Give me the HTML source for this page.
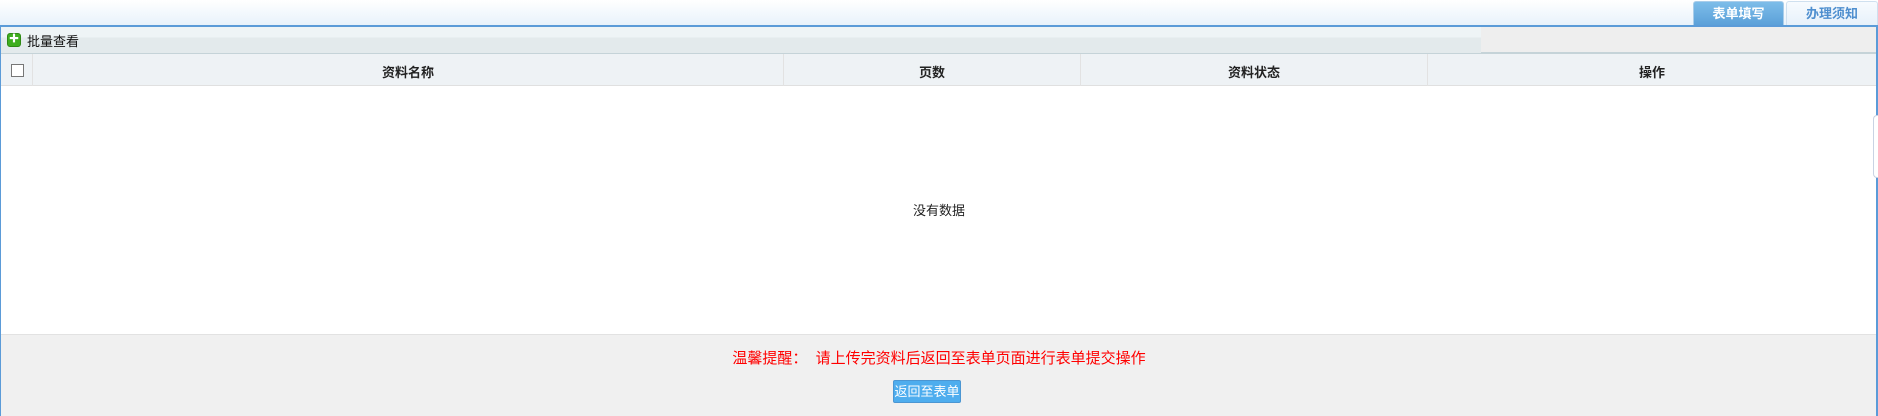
<!DOCTYPE html><html><head><meta charset="utf-8"><style>
*{margin:0;padding:0;box-sizing:border-box}
body{width:1878px;height:416px;overflow:hidden;background:#fff;font-family:"Liberation Sans","Noto Sans CJK SC",sans-serif;font-size:12px;position:relative}
.a{position:absolute}
</style></head><body>
<div class="a" style="left:0;top:0;width:1878px;height:25px;background:linear-gradient(#fff,#e8f2fb)"></div>
<div class="a" style="left:1693px;top:1px;width:91px;height:25px;background:linear-gradient(#7dbde9,#5a9fd8);border:1px solid #a9cdea;border-bottom:none;color:#fff;font-weight:bold;font-size:13px;text-align:center;line-height:24px;border-radius:3px 3px 0 0">表单填写</div>
<div class="a" style="left:1786px;top:1px;width:92px;height:25px;background:linear-gradient(#f7fbfe,#e6f0fa);border:1px solid #cfe0ef;border-bottom:none;color:#4f8fcf;font-weight:bold;font-size:13px;text-align:center;line-height:24px;border-radius:3px 3px 0 0">办理须知</div>
<div class="a" style="left:0;top:25px;width:1878px;height:2px;background:#5b9bd8"></div>
<div class="a" style="left:0;top:27px;width:1px;height:389px;background:#5b9bd8"></div>
<div class="a" style="left:1876px;top:27px;width:2px;height:389px;background:#5b9bd8"></div>
<div class="a" style="top:27px;left:1px;width:1875px;height:27px;background:#eeeeee;border-bottom:2px solid #c5d3d8"></div>
<div class="a" style="left:1px;top:27px;width:1480px;height:26px;background:linear-gradient(#eef4f6 40%,#e3eaec 40%)"></div>
<div class="a" style="left:7px;top:33px;width:14px;height:14px;background:#3eae1e;border-radius:3px;border:1px solid #2e8a14;color:#fff;font-size:10px;line-height:12px;text-align:center">✚</div>
<div class="a" style="left:27px;top:31px;font-size:13px;color:#111">批量查看</div>
<div class="a" style="left:1px;top:54px;width:1875px;height:32px;background:#eef2f5;border-bottom:1px solid #e0e0e0"></div>
<div class="a" style="left:32px;top:54px;width:1px;height:32px;background:#e2e2e2"></div>
<div class="a" style="left:783px;top:54px;width:1px;height:32px;background:#e2e2e2"></div>
<div class="a" style="left:1080px;top:54px;width:1px;height:32px;background:#e2e2e2"></div>
<div class="a" style="left:1427px;top:54px;width:1px;height:32px;background:#e2e2e2"></div>
<div class="a" style="left:11px;top:64px;width:13px;height:13px;border:1px solid #777;background:#fff"></div>
<div class="a" style="left:33px;top:62px;width:750px;text-align:center;font-weight:bold;font-size:13px;color:#222">资料名称</div>
<div class="a" style="left:784px;top:62px;width:296px;text-align:center;font-weight:bold;font-size:13px;color:#222">页数</div>
<div class="a" style="left:1081px;top:62px;width:346px;text-align:center;font-weight:bold;font-size:13px;color:#222">资料状态</div>
<div class="a" style="left:1428px;top:62px;width:448px;text-align:center;font-weight:bold;font-size:13px;color:#222">操作</div>
<div class="a" style="left:1873px;top:115px;width:5px;height:63px;border:1px solid #c9d3e3;border-right:none;border-radius:4px 0 0 4px;background:#fff"></div>
<div class="a" style="left:0;top:200px;width:1878px;text-align:center;font-size:13px;color:#222">没有数据</div>
<div class="a" style="left:1px;top:334px;width:1875px;height:82px;background:#f0f0f0;border-top:1px solid #e2e2e2"></div>
<div class="a" style="left:0;top:347px;width:1878px;text-align:center;font-size:15px;color:#ff0000">温馨提醒：&nbsp;&nbsp;请上传完资料后返回至表单页面进行表单提交操作</div>
<div class="a" style="left:893px;top:380px;width:68px;height:23px;background:#4eadee;border:1px solid #4b96d2;border-radius:2px;color:#fff;font-size:13px;text-align:center;line-height:21px">返回至表单</div>
</body></html>
